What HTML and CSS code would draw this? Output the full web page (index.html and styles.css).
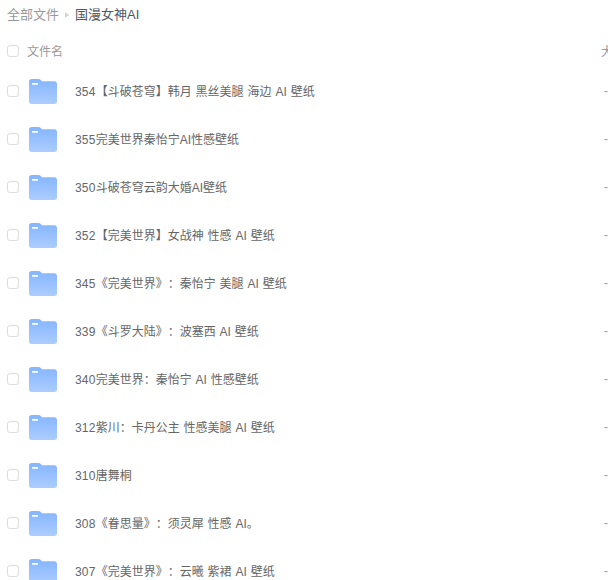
FILE: index.html
```html
<!DOCTYPE html>
<html lang="zh-CN">
<head>
<meta charset="utf-8">
<title>国漫女神AI</title>
<link rel="stylesheet" href="styles.css">
</head>
<body>
<div class="page">
  <nav class="crumbs"><span class="crumb-root">全部文件</span><span class="crumb-sep"></span><span class="crumb-current">国漫女神AI</span></nav>
  <div class="head"><span class="check"></span><span class="head-name">文件名</span><span class="head-size">大小</span></div>
  <div class="row"><span class="check"></span><svg class="folder" viewBox="0 0 28 25"><use href="#f"/></svg><span class="name"><span class="num">354</span>【斗破苍穹】韩月 黑丝美腿 海边 AI 壁纸</span><span class="size">-</span></div>
  <div class="row"><span class="check"></span><svg class="folder" viewBox="0 0 28 25"><use href="#f"/></svg><span class="name"><span class="num">355</span>完美世界秦怡宁AI性感壁纸</span><span class="size">-</span></div>
  <div class="row"><span class="check"></span><svg class="folder" viewBox="0 0 28 25"><use href="#f"/></svg><span class="name"><span class="num">350</span>斗破苍穹云韵大婚AI壁纸</span><span class="size">-</span></div>
  <div class="row"><span class="check"></span><svg class="folder" viewBox="0 0 28 25"><use href="#f"/></svg><span class="name"><span class="num">352</span>【完美世界】女战神 性感 AI 壁纸</span><span class="size">-</span></div>
  <div class="row"><span class="check"></span><svg class="folder" viewBox="0 0 28 25"><use href="#f"/></svg><span class="name"><span class="num">345</span>《完美世界》：秦怡宁 美腿 AI 壁纸</span><span class="size">-</span></div>
  <div class="row"><span class="check"></span><svg class="folder" viewBox="0 0 28 25"><use href="#f"/></svg><span class="name"><span class="num">339</span>《斗罗大陆》：波塞西 AI 壁纸</span><span class="size">-</span></div>
  <div class="row"><span class="check"></span><svg class="folder" viewBox="0 0 28 25"><use href="#f"/></svg><span class="name"><span class="num">340</span>完美世界：秦怡宁 AI 性感壁纸</span><span class="size">-</span></div>
  <div class="row"><span class="check"></span><svg class="folder" viewBox="0 0 28 25"><use href="#f"/></svg><span class="name"><span class="num">312</span>紫川：卡丹公主 性感美腿 AI 壁纸</span><span class="size">-</span></div>
  <div class="row"><span class="check"></span><svg class="folder" viewBox="0 0 28 25"><use href="#f"/></svg><span class="name"><span class="num">310</span>唐舞桐</span><span class="size">-</span></div>
  <div class="row"><span class="check"></span><svg class="folder" viewBox="0 0 28 25"><use href="#f"/></svg><span class="name"><span class="num">308</span>《眷思量》：须灵犀 性感 AI。</span><span class="size">-</span></div>
  <div class="row"><span class="check"></span><svg class="folder" viewBox="0 0 28 25"><use href="#f"/></svg><span class="name"><span class="num">307</span>《完美世界》：云曦 紫裙 AI 壁纸</span><span class="size">-</span></div>
</div>
<svg class="defs" width="0" height="0">
  <defs>
    <linearGradient id="g" x1="0" y1="0" x2="0" y2="1"><stop offset="0" stop-color="#85b5ff"/><stop offset="1" stop-color="#accdff"/></linearGradient>
    <g id="f">
      <path d="M2.500 0h7c1 0 1.600.4 2.200 1l1.100 1.200h12.700c1.400 0 2.500 1.100 2.500 2.500V22.500c0 1.400-1.100 2.500-2.500 2.500H2.500C1.100 25 0 23.900 0 22.500V2.500C0 1.100 1.100 0 2.500 0z" fill="url(#g)"/>
      <rect x="3" y="4" width="6" height="1.800" rx=".5" fill="#fff"/>
    </g>
  </defs>
</svg>
</body>
</html>
```
FILE: styles.css
```css
html, body {
  margin: 0;
  padding: 0;
  height: 100%;
  overflow: hidden;
  background: #fff;
}
.page {
  width: 640px;
  font-family: "Liberation Sans", "Noto Sans CJK SC", sans-serif;
  font-size: 12px;
  color: #666;
  text-spacing-trim: space-all;
}
.defs { position: absolute; }
.crumbs {
  display: flex;
  align-items: center;
  height: 26px;
  margin-bottom: 9px;
  padding-left: 7px;
  font-size: 13px;
}
.crumb-root { color: #999; }
.crumb-sep {
  width: 0;
  height: 0;
  margin: 4px 6px 0;
  border-left: 4px solid #d4d4d4;
  border-top: 3px solid transparent;
  border-bottom: 3px solid transparent;
}
.crumb-current { color: #4f5662; }
.head {
  display: flex;
  align-items: center;
  height: 32px;
  padding-left: 7px;
  color: #999;
}
.row {
  display: flex;
  align-items: center;
  height: 48px;
  padding-left: 7px;
}
.check {
  flex: none;
  box-sizing: border-box;
  width: 12px;
  height: 12px;
  border: 1px solid #dcdcdc;
  border-radius: 3px;
  background: #fff;
}
.head-name { flex: 1; margin-left: 8px; padding-bottom: 2px; }
.head-size { flex: none; width: 39px; padding-bottom: 2px; }
.folder {
  flex: none;
  width: 28px;
  height: 25px;
  margin-left: 10px;
}
.name {
  flex: 1;
  margin-left: 18px;
  padding-bottom: 2px;
  word-spacing: .6px;
}
.num { letter-spacing: .2px; }
.size { flex: none; width: 36px; color: #999; }
```
